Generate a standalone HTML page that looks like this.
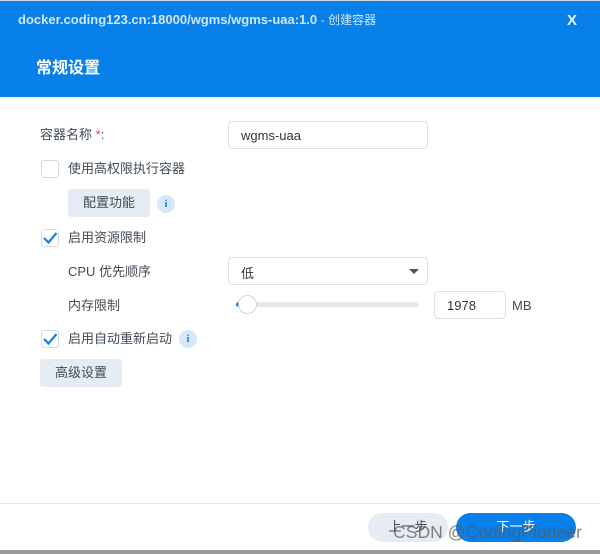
<!DOCTYPE html>
<html><head><meta charset="utf-8"><style>
*{margin:0;padding:0;box-sizing:border-box}
body{width:600px;height:554px;background:#fff;font-family:"Liberation Sans","Noto Sans CJK SC",sans-serif;position:relative;overflow:hidden;color:#414b55;font-size:13px}
.hd{position:absolute;left:0;top:1px;width:600px;height:96px;background:#0780ea}
.top{position:absolute;left:0;top:0;width:600px;height:1px;background:#cfd6dd}
.t1{position:absolute;left:18px;top:11px;color:#cfe5fb;font-size:13px;font-weight:bold}
.t1 span{font-weight:normal;font-size:12px}
.x{position:absolute;left:567px;top:12px;color:#e6f1fc;font-size:15px;font-weight:bold;font-family:"Liberation Sans",sans-serif}
.t2{position:absolute;left:36px;top:54px;color:#fff;font-size:16px;font-weight:bold}
.a{position:absolute;white-space:nowrap}
.inp{position:absolute;border:1px solid #d9e2ea;border-radius:4px;background:#fff}
.cb{position:absolute;width:18px;height:18px;border:1px solid #d3dbe3;border-radius:3px;background:#fff}
.btn{position:absolute;background:#e6ecf3;border-radius:3px;text-align:center;color:#414b55}
.info{position:absolute;width:18px;height:18px;border-radius:50%;background:#d7e8fb;color:#1f7fe0;font-size:11px;font-weight:bold;text-align:center;line-height:18px;font-family:"Liberation Serif",serif}
</style></head><body>
<div class="top"></div>
<div class="hd"></div>
<div class="t1">docker.coding123.cn:18000/wgms/wgms-uaa:1.0 <span>- 创建容器</span></div>
<div class="x">X</div>
<div class="t2">常规设置</div>

<div class="a" style="left:40px;top:124px">容器名称 <span style="color:#e64545">*</span>:</div>
<div class="inp" style="left:228px;top:121px;width:200px;height:28px"><span class="a" style="left:12px;top:6px;color:#333">wgms-uaa</span></div>

<div class="cb" style="left:41px;top:160px"></div>
<div class="a" style="left:68px;top:158px">使用高权限执行容器</div>

<div class="btn" style="left:68px;top:189px;width:82px;height:28px;line-height:28px">配置功能</div>
<div class="info" style="left:157px;top:195px">i</div>

<div class="cb" style="left:41px;top:229px"><svg width="18" height="18" style="position:absolute;left:-1px;top:-1px"><path d="M3 9 L7.5 13.5 L15.5 4" fill="none" stroke="#1a7fe0" stroke-width="2.2"/></svg></div>
<div class="a" style="left:68px;top:227px">启用资源限制</div>

<div class="a" style="left:68px;top:261px">CPU 优先顺序</div>
<div class="inp" style="left:228px;top:257px;width:200px;height:28px"><span class="a" style="left:12px;top:5px;color:#333">低</span>
<svg width="10" height="6" style="position:absolute;left:180px;top:11px"><path d="M0 0 L10 0 L5 5Z" fill="#555"/></svg></div>

<div class="a" style="left:68px;top:295px">内存限制</div>
<div style="position:absolute;left:240px;top:302px;width:179px;height:5px;border-radius:3px;background:#e5e8ec"></div>
<div style="position:absolute;left:236px;top:302px;width:6px;height:5px;border-radius:3px;background:#1a7fe0"></div>
<div style="position:absolute;left:238px;top:295px;width:19px;height:19px;border-radius:50%;background:#fff;border:1px solid #cfd6dd"></div>
<div class="inp" style="left:434px;top:291px;width:72px;height:28px"><span class="a" style="left:12px;top:6px;color:#333">1978</span></div>
<div class="a" style="left:512px;top:298px">MB</div>

<div class="cb" style="left:41px;top:330px"><svg width="18" height="18" style="position:absolute;left:-1px;top:-1px"><path d="M3 9 L7.5 13.5 L15.5 4" fill="none" stroke="#1a7fe0" stroke-width="2.2"/></svg></div>
<div class="a" style="left:68px;top:328px">启用自动重新启动</div>
<div class="info" style="left:179px;top:330px">i</div>

<div class="btn" style="left:40px;top:359px;width:82px;height:28px;line-height:28px">高级设置</div>

<div style="position:absolute;left:0;top:503px;width:600px;height:1px;background:#e3e7eb"></div>
<div style="position:absolute;left:368px;top:513px;width:80px;height:29px;border-radius:15px;background:#e6ecf3;text-align:center;line-height:27px;color:#414b55">上一步</div>
<div style="position:absolute;left:456px;top:513px;width:120px;height:29px;border-radius:15px;background:#0780ea;text-align:center;line-height:27px;color:#fff">下一步</div>
<div style="position:absolute;left:0;top:550px;width:600px;height:4px;background:#9a9a9a"></div>
<div class="a" style="left:393px;top:522px;font-size:17.6px;color:rgba(90,90,90,0.75)">CSDN @CodingPioneer</div>
</body></html>
